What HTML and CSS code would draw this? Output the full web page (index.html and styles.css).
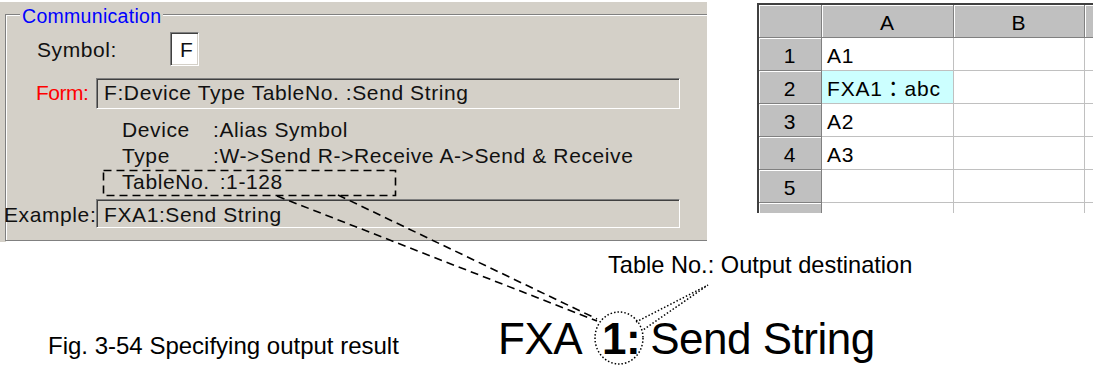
FILE: index.html
```html
<!DOCTYPE html>
<html lang="en">
<head>
<meta charset="utf-8">
<title>Fig. 3-54 Specifying output result</title>
<link rel="stylesheet" href="styles.css">
</head>
<body>
<div class="figure">
  <div class="top">
    <section class="dialog">
      <div class="group">
        <span class="legend">Communication</span>
        <div class="row row-symbol">
          <span class="lbl-symbol">Symbol:</span>
          <span class="sym-box">F</span>
        </div>
        <div class="row row-form">
          <span class="lbl-form">Form:</span>
          <div class="field field-form">F:Device Type TableNo. :Send String</div>
        </div>
        <div class="defs">
          <div class="def"><span class="def-key">Device</span><span>:Alias Symbol</span></div>
          <div class="def"><span class="def-key">Type</span><span>:W-&gt;Send R-&gt;Receive A-&gt;Send &amp; Receive</span></div>
          <div class="def"><span class="def-key">TableNo.</span><span>:1-128</span></div>
        </div>
        <div class="row row-example">
          <span class="lbl-example">Example:</span>
          <div class="field field-example">FXA1:Send String</div>
        </div>
      </div>
    </section>

    <section class="sheet">
      <div class="hd"></div><div class="hd">A</div><div class="hd">B</div><div class="hd"></div>
      <div class="hd rn">1</div><div class="cell">A1</div><div class="cell"></div><div class="cell"></div>
      <div class="hd rn">2</div><div class="cell hl">FXA1：abc</div><div class="cell"></div><div class="cell"></div>
      <div class="hd rn">3</div><div class="cell">A2</div><div class="cell"></div><div class="cell"></div>
      <div class="hd rn">4</div><div class="cell">A3</div><div class="cell"></div><div class="cell"></div>
      <div class="hd rn">5</div><div class="cell"></div><div class="cell"></div><div class="cell"></div>
      <div class="hd rn"></div><div class="cell"></div><div class="cell"></div><div class="cell"></div>
    </section>
  </div>

  <div class="bottom">
    <div class="note">Table No.: Output destination</div>
    <div class="caption">Fig. 3-54 Specifying output result</div>
    <div class="formula"><span>FXA</span><span class="one">1</span><span class="colon">:</span><span class="rest">Send String</span></div>
  </div>

  <svg class="overlay" width="1093" height="369" viewBox="0 0 1093 369" aria-hidden="true">
    <g fill="none" stroke="#000" stroke-width="1.6" stroke-dasharray="8 5">
      <rect x="103.5" y="170.5" width="292" height="25"/>
      <line x1="338" y1="195" x2="597" y2="319"/>
      <line x1="277" y1="196" x2="597" y2="321"/>
    </g>
    <g fill="none" stroke="#000" stroke-width="1.5" stroke-dasharray="1.5 2">
      <ellipse cx="619" cy="338" rx="24" ry="26"/>
      <polyline points="636,322 708,285 643,330"/>
    </g>
  </svg>
</div>
</body>
</html>
```

FILE: styles.css
```css
html, body {
  margin: 0;
  background: #fff;
}

body {
  font-family: "Liberation Sans", Arial, sans-serif;
  color: #000;
}

.figure {
  position: relative;
  width: 1093px;
  height: 369px;
  overflow: hidden;
}

.top {
  display: flex;
  align-items: flex-start;
}

/* ---------- dialog ---------- */
.dialog {
  width: 707px;
  height: 240px;
  margin-top: 2px;
  background: #d4d0c8;
  overflow: hidden;
  font-size: 21px;
  letter-spacing: 0.6px;
  color: #111;
}

.group {
  display: flex;
  flex-direction: column;
  align-items: flex-start;
  width: 800px;
  height: 225px;
  margin: 12px 0 0 5px;
  border: 1px solid #808080;
  box-shadow: inset 1px 1px 0 #fff, 1px 1px 0 #fff;
}

.legend {
  margin: -8px 0 0 14px;
  padding: 0 2px;
  background: #d4d0c8;
  color: #0000ff;
  font-size: 19.5px;
  line-height: 19px;
  letter-spacing: 0.3px;
}

.row {
  display: flex;
  align-items: baseline;
}

.row-symbol {
  margin-top: 6px;
  padding-left: 31px;
}

.lbl-symbol {
  width: 133px;
}

.sym-box {
  box-sizing: border-box;
  width: 29px;
  height: 34px;
  padding: 5px 0 0 9px;
  line-height: 24px;
  background: #fff;
  border: 1px solid;
  border-color: #808080 #fff #fff #808080;
  box-shadow: inset 1px 1px 0 #404040, inset -1px -1px 0 #d4d0c8;
}

.row-form {
  margin-top: 12px;
  padding-left: 30px;
}

.lbl-form {
  width: 60px;
  color: #ff0000;
  letter-spacing: -0.5px;
}

.field {
  box-sizing: border-box;
  width: 584px;
  padding: 2px 7px 0;
  line-height: 24px;
  white-space: nowrap;
  border: 1px solid;
  border-color: #808080 #fff #fff #808080;
  box-shadow: inset 1px 1px 0 #404040, inset -1px -1px 0 #d4d0c8;
}

.field-form {
  height: 31px;
}

.field-example {
  height: 29px;
  padding-top: 3px;
}

.defs {
  display: flex;
  flex-direction: column;
  margin: 8px 0 0 116px;
  line-height: 26px;
  white-space: nowrap;
}

.def {
  display: flex;
}

.def-key {
  min-width: 81px;
  padding-right: 10px;
}

.row-example {
  margin: 4px 0 0 -2px;
}

.lbl-example {
  width: 92px;
}

/* ---------- spreadsheet ---------- */
.sheet {
  display: grid;
  grid-template-columns: 63px 132px 131px 40px;
  grid-auto-rows: 33px;
  width: 334px;
  height: 208px;
  margin: 3px 0 0 50px;
  overflow: hidden;
  border-left: 2px solid #404040;
  border-top: 2px solid #404040;
  font-family: "Liberation Sans", "Noto Sans CJK JP", sans-serif;
  font-size: 21px;
  letter-spacing: 0.8px;
}

.sheet > div {
  box-sizing: border-box;
  white-space: nowrap;
}

.hd {
  background: #c0c0c0;
  border-right: 1px solid #808080;
  border-bottom: 1px solid #808080;
  box-shadow: inset 1px 1px 0 #fff;
  text-align: center;
  padding-top: 4px;
  line-height: 28px;
}

.hd.rn {
  padding-top: 5px;
  line-height: 26px;
}

.cell {
  background: #fff;
  border-right: 1px solid #c0c0c0;
  border-bottom: 1px solid #c0c0c0;
  padding: 5px 0 0 5px;
  line-height: 26px;
}

.cell.hl {
  background: #ccffff;
}

/* ---------- bottom ---------- */
.bottom {
  display: grid;
  grid-template-columns: 498px 1fr;
  align-items: baseline;
}

.note {
  grid-column: 2;
  grid-row: 1;
  margin: 12px 0 0 110px;
  font-size: 23.6px;
  line-height: 23px;
  white-space: nowrap;
}

.caption {
  grid-column: 1;
  grid-row: 2;
  padding-left: 48px;
  font-size: 24px;
  white-space: nowrap;
}

.formula {
  grid-column: 2;
  grid-row: 2;
  margin-top: 40px;
  font-size: 44px;
  line-height: 44px;
  letter-spacing: -0.5px;
  white-space: nowrap;
}

.one {
  margin-left: 20px;
  font-weight: bold;
}

.colon {
  font-weight: bold;
}

.rest {
  margin-left: 10px;
}

/* ---------- annotations ---------- */
.overlay {
  position: absolute;
  top: 0;
  left: 0;
  pointer-events: none;
}
```
